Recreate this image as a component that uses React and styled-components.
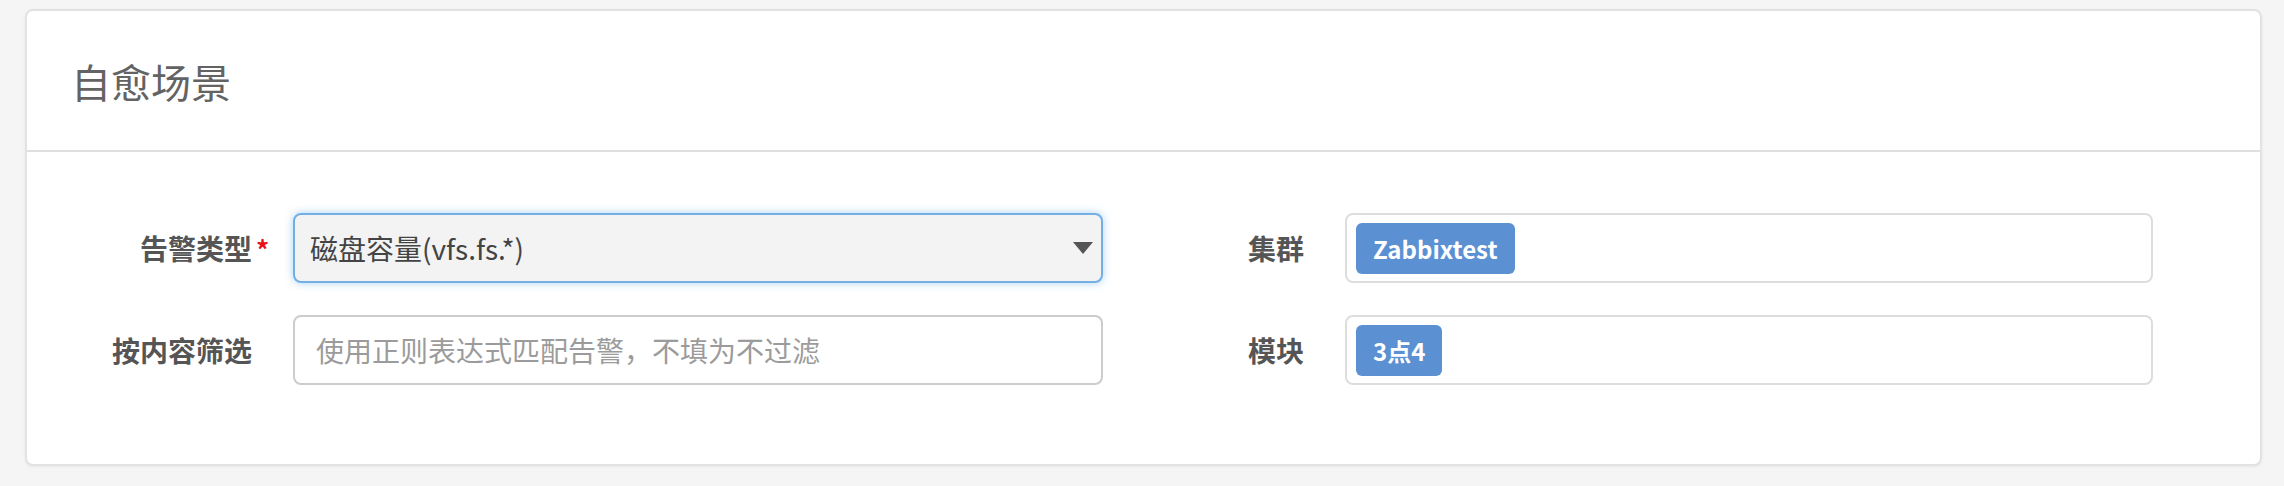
import React from 'react';
import styled, { createGlobalStyle } from 'styled-components';

const GlobalStyle = createGlobalStyle`
  html, body {
    margin: 0;
    background: #f5f5f5;
  }
  body {
    font-family: "Noto Sans CJK SC", "Noto Sans", sans-serif;
  }
  * {
    box-sizing: border-box;
  }
`;

const Page = styled.div`
  padding: 9px 22px 20px 25px;
`;

const Card = styled.section`
  background: #fff;
  border: 2px solid #e2e2e2;
  border-radius: 8px;
  box-shadow: 0 1px 3px rgba(0, 0, 0, 0.06);
`;

const CardHeader = styled.header`
  display: flex;
  align-items: center;
  height: 141px;
  padding-left: 44px;
  border-bottom: 2px solid #e0e0e0;
`;

const Title = styled.h2`
  margin: 0;
  font-size: 40px;
  font-weight: 400;
  color: #636363;
  line-height: 1;
`;

const CardBody = styled.div`
  display: grid;
  grid-template-columns: 1003px 1001px;
  column-gap: 49px;
  padding: 61px 0 79px 73px;
`;

const Column = styled.div`
  display: flex;
  flex-direction: column;
  gap: 32px;
`;

const FormGroup = styled.div`
  display: grid;
  grid-template-columns: 152px ${p => p.$inputWidth}px;
  column-gap: 41px;
  align-items: center;
  height: 70px;
`;

const Label = styled.label`
  position: relative;
  justify-self: end;
  font-size: 28px;
  font-weight: 700;
  color: #555;
  line-height: 1;

  ${p => p.$required && `
    &::after {
      content: "*";
      position: absolute;
      left: calc(100% + 4px);
      top: 2px;
      color: #e8101a;
      font-size: 26px;
      font-weight: 700;
    }
  `}
`;

const FakeSelect = styled.div`
  display: flex;
  align-items: center;
  justify-content: space-between;
  height: 70px;
  padding: 0 8px 0 15px;
  border: 2px solid #74afe3;
  border-radius: 8px;
  background: #f3f3f3;
  box-shadow: 0 0 9px rgba(102, 175, 233, 0.55);
  font-size: 28px;
  color: #444;
`;

const Caret = styled.span`
  width: 0;
  height: 0;
  border-left: 10px solid transparent;
  border-right: 10px solid transparent;
  border-top: 12px solid #555;
`;

const TextInput = styled.input`
  width: 100%;
  height: 70px;
  padding: 0 21px;
  border: 2px solid #ccc;
  border-radius: 8px;
  background: #fff;
  font-family: inherit;
  font-size: 28px;
  color: #444;
  outline: none;

  &::placeholder {
    color: #9b9b9b;
  }
`;

const TagBox = styled.div`
  display: flex;
  align-items: center;
  gap: 8px;
  height: 70px;
  padding: 0 9px;
  border: 2px solid #ddd;
  border-radius: 8px;
  background: #fff;
`;

const Tag = styled.span`
  display: inline-flex;
  align-items: center;
  height: 51px;
  padding: 0 17px;
  border-radius: 6px;
  background: #5b90d3;
  color: #fff;
  font-size: 24px;
  font-weight: 700;
`;

export default function App() {
  return (
    <>
      <GlobalStyle />
      <Page>
        <Card>
          <CardHeader>
            <Title>自愈场景</Title>
          </CardHeader>
          <CardBody>
            <Column>
              <FormGroup $inputWidth={810}>
                <Label $required>告警类型</Label>
                <FakeSelect>
                  <span>磁盘容量(vfs.fs.*)</span>
                  <Caret />
                </FakeSelect>
              </FormGroup>
              <FormGroup $inputWidth={810}>
                <Label>按内容筛选</Label>
                <TextInput placeholder="使用正则表达式匹配告警，不填为不过滤" />
              </FormGroup>
            </Column>
            <Column>
              <FormGroup $inputWidth={808}>
                <Label>集群</Label>
                <TagBox>
                  <Tag>Zabbixtest</Tag>
                </TagBox>
              </FormGroup>
              <FormGroup $inputWidth={808}>
                <Label>模块</Label>
                <TagBox>
                  <Tag>3点4</Tag>
                </TagBox>
              </FormGroup>
            </Column>
          </CardBody>
        </Card>
      </Page>
    </>
  );
}
